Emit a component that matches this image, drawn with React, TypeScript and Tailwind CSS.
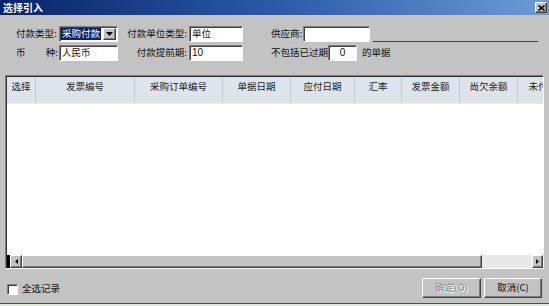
import React from "react";

const font = { fontFamily: '"Noto Sans CJK SC", "Liberation Sans", sans-serif' };

function Sunken({ className = "", children }: { className?: string; children?: React.ReactNode }) {
  return (
    <div
      className={
        "h-[16px] shrink-0 bg-white border border-t-[#808080] border-l-[#808080] border-b-white border-r-white shadow-[inset_1px_1px_0_#404040] flex items-center overflow-hidden " +
        className
      }
    >
      {children}
    </div>
  );
}

function Raised({ className = "", children }: { className?: string; children?: React.ReactNode }) {
  return (
    <div
      className={
        "shrink-0 bg-[#c3c3c3] border border-t-white border-l-white border-b-[#404040] border-r-[#404040] shadow-[inset_-1px_-1px_0_#808080] flex items-center justify-center " +
        className
      }
    >
      {children}
    </div>
  );
}

const cols: { t: string; w: number }[] = [
  { t: "选择", w: 29 },
  { t: "发票编号", w: 99 },
  { t: "采购订单编号", w: 88 },
  { t: "单据日期", w: 68 },
  { t: "应付日期", w: 64 },
  { t: "汇率", w: 47 },
  { t: "发票金额", w: 58 },
  { t: "尚欠余额", w: 58 },
  { t: "未付余额", w: 60 },
];

export default function App() {
  return (
    <div
      className="w-[549px] h-[306px] bg-[#c3c3c3] flex flex-col overflow-hidden text-[9.5px] text-[#111] leading-none whitespace-nowrap"
      style={font}
    >
      {/* Title bar */}
      <div className="h-[15px] shrink-0 bg-gradient-to-r from-[#0a246a] via-[#2a5aa8] to-[#6c9cd8] flex items-center justify-between pl-[3px] pr-[2px]">
        <span className="text-white text-[10px] font-bold">选择引入</span>
        <Raised className="w-[12px] h-[11px]">
          <svg width="7" height="6" viewBox="0 0 7 6">
            <path d="M0.5 0.5 L6.5 5.5 M6.5 0.5 L0.5 5.5" stroke="#000" strokeWidth="1.6" />
          </svg>
        </Raised>
      </div>

      {/* Form */}
      <div className="pt-[11px] pl-[16px] flex flex-col gap-[3px]">
        <div className="flex items-center h-[16px]">
          <div className="w-[43px] shrink-0">付款类型:</div>
          <Sunken className="w-[59px] pl-[1px] pr-[1px] justify-between">
            <span className="bg-[#0a246a] text-white h-[12px] flex items-center px-[1px]">采购付款</span>
            <Raised className="w-[13px] h-[12px]">
              <svg width="7" height="4" viewBox="0 0 7 4">
                <path d="M0 0 H7 L3.5 4 Z" fill="#000" />
              </svg>
            </Raised>
          </Sunken>
          <div className="w-[71px] shrink-0 text-right pr-[2px]">付款单位类型:</div>
          <Sunken className="w-[54px] pl-[2px]">单位</Sunken>
          <div className="w-[28px] shrink-0" />
          <div className="w-[32px] shrink-0">供应商:</div>
          <Sunken className="w-[67px]" />
          <div className="ml-[3px] w-[165px] h-[15px] shrink-0 border-b border-[#404040]" />
        </div>
        <div className="flex items-center h-[16px]">
          <div className="w-[43px] shrink-0 flex justify-between pr-[1px]">
            <span>币</span>
            <span>种:</span>
          </div>
          <Sunken className="w-[59px] pl-[2px]">人民币</Sunken>
          <div className="w-[71px] shrink-0 text-right pr-[2px]">付款提前期:</div>
          <Sunken className="w-[54px] pl-[2px]">
            <span style={{ fontFamily: '"Liberation Sans", sans-serif' }} className="text-[10px]">10</span>
          </Sunken>
          <div className="w-[28px] shrink-0" />
          <div className="w-[57px] shrink-0">不包括已过期</div>
          <Sunken className="w-[29px] justify-center">
            <span style={{ fontFamily: '"Liberation Sans", sans-serif' }} className="text-[10px]">0</span>
          </Sunken>
          <div className="ml-[5px]">的单据</div>
        </div>
      </div>

      {/* Table */}
      <div className="mt-[14px] mx-[5px] h-[194px] shrink-0 border border-t-[#808080] border-l-[#808080] border-b-white border-r-white shadow-[inset_1px_1px_0_#303030] flex flex-col pt-[1px] pl-[1px] overflow-hidden">
        <div className="h-[27px] shrink-0 bg-[#dde4ec] flex overflow-hidden border-b border-[#e8edf2]">
          {cols.map((c) => (
            <div
              key={c.t}
              className="shrink-0 flex justify-center pt-[5px] border-r border-[#c2cbd5] text-[#222]"
              style={{ width: c.w }}
            >
              {c.t}
            </div>
          ))}
        </div>
        <div className="flex-1 bg-white" />
        <div className="h-[13px] shrink-0 flex bg-[#e8e8e8]">
          <div className="w-[3px] bg-black" />
          <Raised className="w-[12px] h-[13px]">
            <svg width="3" height="5" viewBox="0 0 3 5">
              <path d="M3 0 V5 L0 2.5 Z" fill="#000" />
            </svg>
          </Raised>
          <Raised className="w-[460px] h-[13px]" />
          <div className="flex-1" />
          <Raised className="w-[11px] h-[13px]">
            <svg width="3" height="5" viewBox="0 0 3 5">
              <path d="M0 0 V5 L3 2.5 Z" fill="#000" />
            </svg>
          </Raised>
        </div>
      </div>

      {/* Bottom */}
      <div className="mt-[9px] flex items-center justify-between pl-[7px] pr-[7px] h-[20px] shrink-0">
        <div className="flex items-center gap-[4px] mt-[2px]">
          <div className="w-[11px] h-[11px] bg-white border border-t-[#808080] border-l-[#808080] border-b-white border-r-white shadow-[inset_1px_1px_0_#404040]" />
          <span>全选记录</span>
        </div>
        <div className="flex gap-[3px]">
          <Raised className="w-[59px] h-[20px]">
            <span className="text-[#8a8a8a] [text-shadow:1px_1px_0_#fff]">确定(O)</span>
          </Raised>
          <Raised className="w-[58px] h-[20px]">
            <span>取消(C)</span>
          </Raised>
        </div>
      </div>

      <div className="flex-1" />
      <div className="h-[1px] shrink-0 bg-[#3f5a3f]" />
      <div className="h-[2px] shrink-0 bg-[#dfead8]" />
    </div>
  );
}
